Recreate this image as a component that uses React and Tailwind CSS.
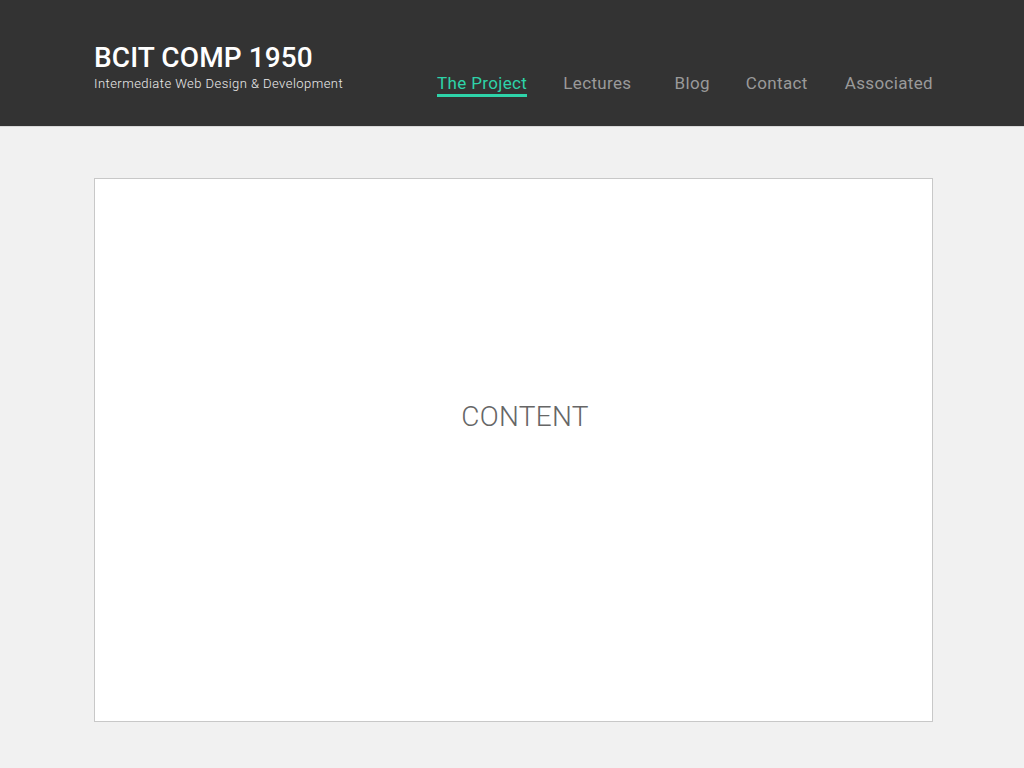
import React from "react";

const links = [
  { label: "The Project", active: true, ml: "ml-0" },
  { label: "Lectures", ml: "ml-[36px]" },
  { label: "Blog", ml: "ml-[43px]" },
  { label: "Contact", ml: "ml-[36px]" },
  { label: "Associated", ml: "ml-[37px]" },
];

export default function App() {
  return (
    <div className="min-h-[768px] bg-[#f1f1f1] font-['Roboto',sans-serif]">
      <header className="h-[127px] bg-[#333333] border-b border-[#d9d9d9]">
        <div className="ml-[94px] mr-[91px] flex h-full items-start justify-between pt-[41px]">
          <div>
            <h1 className="text-[28px] leading-[34px] font-medium text-white tracking-[0.1px]">
              BCIT COMP 1950
            </h1>
            <p className="text-[13px] leading-[17px] font-light text-[#ececec] tracking-[0.45px]">
              Intermediate Web Design &amp; Development
            </p>
          </div>
          <nav className="flex pt-[30px]">
            {links.map((l) => (
              <a
                key={l.label}
                className={`${l.ml} flex flex-col items-center text-[17px] leading-[24px] tracking-[0.35px] ${
                  l.active ? "text-[#2ed3a9]" : "text-[#9a9a9a]"
                }`}
              >
                {l.label}
                {l.active && <span className="-mt-[1px] h-[3px] w-full bg-[#2ed3a9]" />}
              </a>
            ))}
          </nav>
        </div>
      </header>
      <main className="pl-[94px] pr-[91px] pt-[51px]">
        <div className="flex h-[544px] items-center justify-center border border-[#c8c8c8] bg-white pb-[66px] pl-[23px]">
          <span className="text-[28px] font-light tracking-[0.3px] text-[#666666]">CONTENT</span>
        </div>
      </main>
    </div>
  );
}
